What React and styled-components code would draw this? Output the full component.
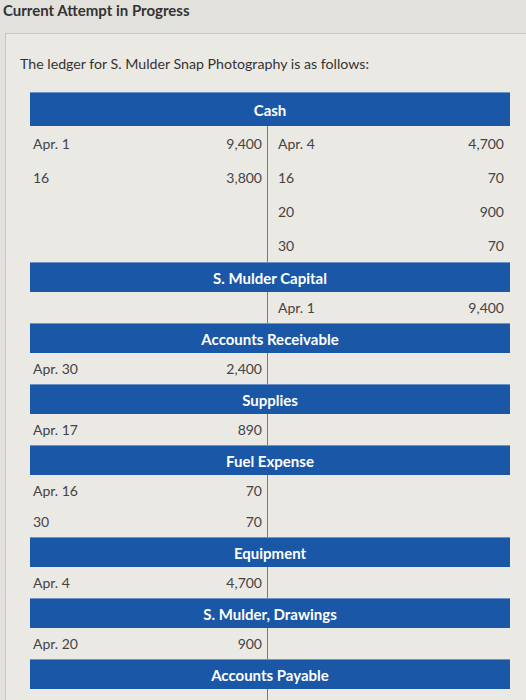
import React from 'react';
import styled, { createGlobalStyle } from 'styled-components';

const GlobalStyle = createGlobalStyle`
  body {
    margin: 0;
    background: #e3e1dc;
    font-family: Lato, "Open Sans", sans-serif;
    color: #3a3a3a;
  }
`;

const Page = styled.div`
  height: 700px;
  overflow: hidden;
`;

const Heading = styled.div`
  padding: 1px 0 0 3px;
  height: 32px;
  font-size: 15px;
  font-weight: 700;
  color: #333;
`;

const Card = styled.div`
  margin-left: 5px;
  border-top: 1px solid #c8c6c1;
  border-left: 1px solid #c8c6c1;
  background: #ebe9e4;
  padding: 21px 16px 0 24px;
`;

const Intro = styled.p`
  margin: 0 0 20px -10px;
  font-size: 14.2px;
  color: #333;
`;

const Bar = styled.div`
  height: ${({ tall }) => (tall ? 34 : 30)}px;
  background: #1a57a6;
  border-top: 1px solid #6b93c8;
  box-sizing: border-box;
  display: flex;
  align-items: center;
  justify-content: center;
  color: #fff;
  font-size: 15px;
  font-weight: 700;
`;

const Row = styled.div`
  display: grid;
  grid-template-columns: 238px 1fr;
  height: ${({ tall }) => (tall ? 34 : 31)}px;
  font-size: 14px;
  color: #444;
`;

const Side = styled.div`
  display: flex;
  align-items: center;
  justify-content: space-between;
  padding: ${({ right }) => (right ? '0 6px 0 10px' : '0 5px 0 3px')};
  border-right: ${({ right }) => (right ? 'none' : '1px solid #7a7a7a')};
`;

const accounts = [
  {
    title: 'Cash',
    tall: true,
    rows: [
      [['Apr. 1', '9,400'], ['Apr. 4', '4,700']],
      [['16', '3,800'], ['16', '70']],
      [null, ['20', '900']],
      [null, ['30', '70']],
    ],
  },
  { title: 'S. Mulder Capital', rows: [[null, ['Apr. 1', '9,400']]] },
  { title: 'Accounts Receivable', rows: [[['Apr. 30', '2,400'], null]] },
  { title: 'Supplies', rows: [[['Apr. 17', '890'], null]] },
  {
    title: 'Fuel Expense',
    rows: [
      [['Apr. 16', '70'], null],
      [['30', '70'], null],
    ],
  },
  { title: 'Equipment', rows: [[['Apr. 4', '4,700'], null]] },
  { title: 'S. Mulder, Drawings', rows: [[['Apr. 20', '900'], null]] },
  { title: 'Accounts Payable', rows: [[null, ['Apr. 17', '890']]] },
];

const Cell = ({ entry, right }) => (
  <Side right={right}>
    <span>{entry ? entry[0] : ''}</span>
    <span>{entry ? entry[1] : ''}</span>
  </Side>
);

export default function App() {
  return (
    <Page>
      <GlobalStyle />
      <Heading>Current Attempt in Progress</Heading>
      <Card>
        <Intro>The ledger for S. Mulder Snap Photography is as follows:</Intro>
        {accounts.map((account) => (
          <div key={account.title}>
            <Bar tall={account.tall}>{account.title}</Bar>
            {account.rows.map((row, i) => (
              <Row key={i} tall={account.tall}>
                <Cell entry={row[0]} />
                <Cell entry={row[1]} right />
              </Row>
            ))}
          </div>
        ))}
      </Card>
    </Page>
  );
}
